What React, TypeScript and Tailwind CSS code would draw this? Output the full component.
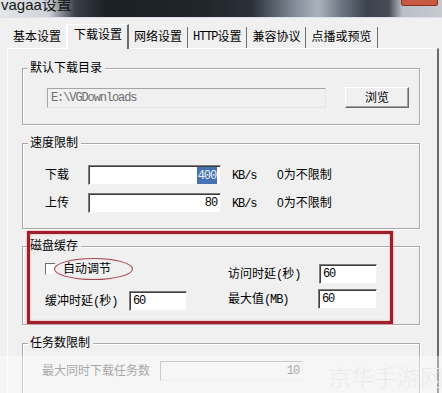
import type { ReactNode } from "react";

/**
 * vagaa 设置窗口 — "下载设置" 页，经典 Windows 控件风格。
 */

const TABS = ["基本设置", "下载设置", "网络设置", "HTTP设置", "兼容协议", "点播或预览"];

// 半角字符（宋体里是等宽的）
function M({ children }: { children: ReactNode }) {
  return <span className="font-['Liberation_Mono',monospace] text-[12px] tracking-[-1.1px]">{children}</span>;
}

function Edit({
  className,
  children,
  right,
  disabled,
}: {
  className: string;
  children?: ReactNode;
  right?: boolean;
  disabled?: boolean;
}) {
  return (
    <div
      className={`flex flex-none items-center border px-[3px] leading-none ${
        disabled
          ? "border-t-[#a5a5a5] border-l-[#a5a5a5] border-r-[#e6e6e6] border-b-[#e6e6e6] bg-[#f0f0f0] text-[#6d6d6d]"
          : "border-t-[#7c7c7c] border-l-[#7c7c7c] border-r-[#f2f2f2] border-b-[#f2f2f2] bg-white text-black shadow-[inset_1px_1px_0_#3f3f3f]"
      } ${right ? "justify-end" : ""} ${className}`}
    >
      {children}
    </div>
  );
}

function Group({ title, className, children }: { title: string; className: string; children: ReactNode }) {
  return (
    <div className={`w-[398px] border border-[#a9a9a9] shadow-[inset_1px_1px_0_#fff,1px_1px_0_#fff] ${className}`}>
      <div className="-mt-[8px] ml-[5px] w-fit bg-[#f0f0f0] pl-[2px] pr-[3px] leading-[14px]">{title}</div>
      {children}
    </div>
  );
}

export default function App() {
  return (
    <div className="relative h-[393px] w-[442px] overflow-hidden bg-[#f0f0f0] font-['Liberation_Sans','Noto_Sans_CJK_SC',sans-serif] text-[12px] text-black">
      {/* 标题栏 */}
      <div className="flex h-[17px] justify-between overflow-hidden bg-[linear-gradient(90deg,#e2e5e9_0%,#cfd3d8_11%,#3a4048_17%,#1b2025_24%,#20252b_45%,#2b3139_57%,#7d8692_66%,#aab3bd_72%,#6f7884_77%,#3c434c_83%,#464d56_88%,#b9bfc6_91%,#c6cbd1_100%)]">
        <div className="-mt-[3px] pl-[1px] text-[15px] leading-[15px] text-[#161616]">vagaa设置</div>
        <div className="mr-[4px] h-[6px] w-[37px] rounded-b-[3px] border border-t-0 border-[#8d2f1f] bg-[#c65a43]" />
      </div>
      <div className="h-px bg-[#dde0e4]" />

      {/* 选项卡 */}
      <div className="flex h-[30px] items-end pl-[8px]">
        {TABS.map((t, i) => {
          const active = i === 1;
          const label = t.startsWith("HTTP") ? (
            <>
              <M>HTTP</M>设置
            </>
          ) : (
            t
          );
          if (active)
            return (
              <div
                key={t}
                className="relative z-10 -mb-px flex h-[25px] items-center border-l-2 border-t border-r-2 border-l-white border-t-white border-r-[#6a6a6a] bg-[#f0f0f0] pb-[4px] pl-[6px] pr-[5px] leading-[14px]"
              >
                {label}
              </div>
            );
          return (
            <div
              key={t}
              className={`flex h-[21px] items-center pb-[2px] pl-[5px] pr-[5px] leading-[14px] ${
                i === 0 ? "" : "border-r border-r-[#6e6e6e]"
              }`}
            >
              {label}
            </div>
          );
        })}
      </div>

      {/* 选项卡页面 */}
      <div className="ml-[7px] h-[400px] w-[432px] border-l border-t border-r-2 border-l-white border-t-white border-r-[#6a6a6a] pl-[14px]">
        <Group title="默认下载目录" className="mt-[19px] pb-[16px]">
          <div className="mt-[12px] flex h-[21px] items-center pl-[24px]">
            <Edit className="h-[20px] w-[279px]" disabled>
              <M>E:\VGDownloads</M>
            </Edit>
            <div className="ml-[19px] flex h-[21px] w-[64px] items-center justify-center border border-t-white border-l-white border-r-[#696969] border-b-[#696969] shadow-[inset_-1px_-1px_0_#a0a0a0] leading-none">
              浏览
            </div>
          </div>
        </Group>

        <Group title="速度限制" className="mt-[18px] pb-[15px]">
          <div className="mt-[15px] flex flex-col gap-[8px] pl-[22px]">
            {[
              { name: "下载", value: "400", sel: true },
              { name: "上传", value: "80", sel: false },
            ].map((r) => (
              <div key={r.name} className="flex h-[20px] items-center">
                <div className="w-[43px] leading-none">{r.name}</div>
                <Edit className="h-[20px] w-[133px]" right>
                  {r.sel ? (
                    <span className="bg-[#4673b1] px-[1px] py-[2px] text-[#eef3ff]">
                      <M>{r.value}</M>
                    </span>
                  ) : (
                    <M>{r.value}</M>
                  )}
                </Edit>
                <div className="ml-[11px] w-[45px] leading-none">
                  <M>KB/s</M>
                </div>
                <div className="leading-none">0为不限制</div>
              </div>
            ))}
          </div>
        </Group>

        <Group title="磁盘缓存" className="mt-[17px] pb-[13px]">
          <div className="flex items-start pl-[22px]">
            <div className="w-[183px]">
              <div className="mt-[5px] flex h-[22px] items-center">
                <div className="h-[12px] w-[10px] flex-none border border-r-0 border-t-[#6e6e6e] border-l-[#6e6e6e] border-b-[#eeeeee] bg-white" />
                <div className="-ml-px flex h-[22px] items-center rounded-[50%] border border-[#a8424c] bg-[#f0f0f0] pl-[8px] pr-[21px] leading-none">
                  自动调节
                </div>
              </div>
              <div className="mt-[11px] flex h-[20px] items-center">
                <div className="w-[84px] leading-none">
                  缓冲时延<M>(</M>秒<M>)</M>
                </div>
                <Edit className="h-[20px] w-[58px]">
                  <M>60</M>
                </Edit>
              </div>
            </div>
            <div>
              <div className="mt-[11px] flex h-[20px] items-center">
                <div className="w-[91px] leading-none">
                  访问时延<M>(</M>秒<M>)</M>
                </div>
                <Edit className="h-[20px] w-[58px]">
                  <M>60</M>
                </Edit>
              </div>
              <div className="mt-[5px] flex h-[20px] items-center">
                <div className="w-[90px] leading-none">
                  最大值<M>(MB)</M>
                </div>
                <Edit className="h-[20px] w-[59px]">
                  <M>60</M>
                </Edit>
              </div>
            </div>
          </div>
        </Group>

        <Group title="任务数限制" className="mt-[18px] pb-[20px]">
          <div className="mt-[11px] flex h-[20px] items-center pl-[19px]">
            <div className="w-[118px] leading-none text-[#6d6d6d]">最大同时下载任务数</div>
            <Edit className="h-[20px] w-[143px]" right disabled>
              <M>10</M>
            </Edit>
          </div>
        </Group>
      </div>

      {/* 标注：红框 */}
      <div className="pointer-events-none absolute left-[27px] top-[231px] h-[93px] w-[366px] border-[3px] border-[#a11f2b] shadow-[0_0_2px_#e28c8c,inset_0_0_2px_#e28c8c]" />

      {/* 图片底部的水印条 */}
      <div className="pointer-events-none absolute left-0 top-[356px] h-[37px] w-full bg-white/40" />
      <div className="pointer-events-none absolute left-[328px] top-[362px] whitespace-nowrap font-['Noto_Sans_CJK_SC',sans-serif] text-[23px] font-light leading-[28px] text-[#ebebeb]">
        京华手游网
      </div>
    </div>
  );
}
